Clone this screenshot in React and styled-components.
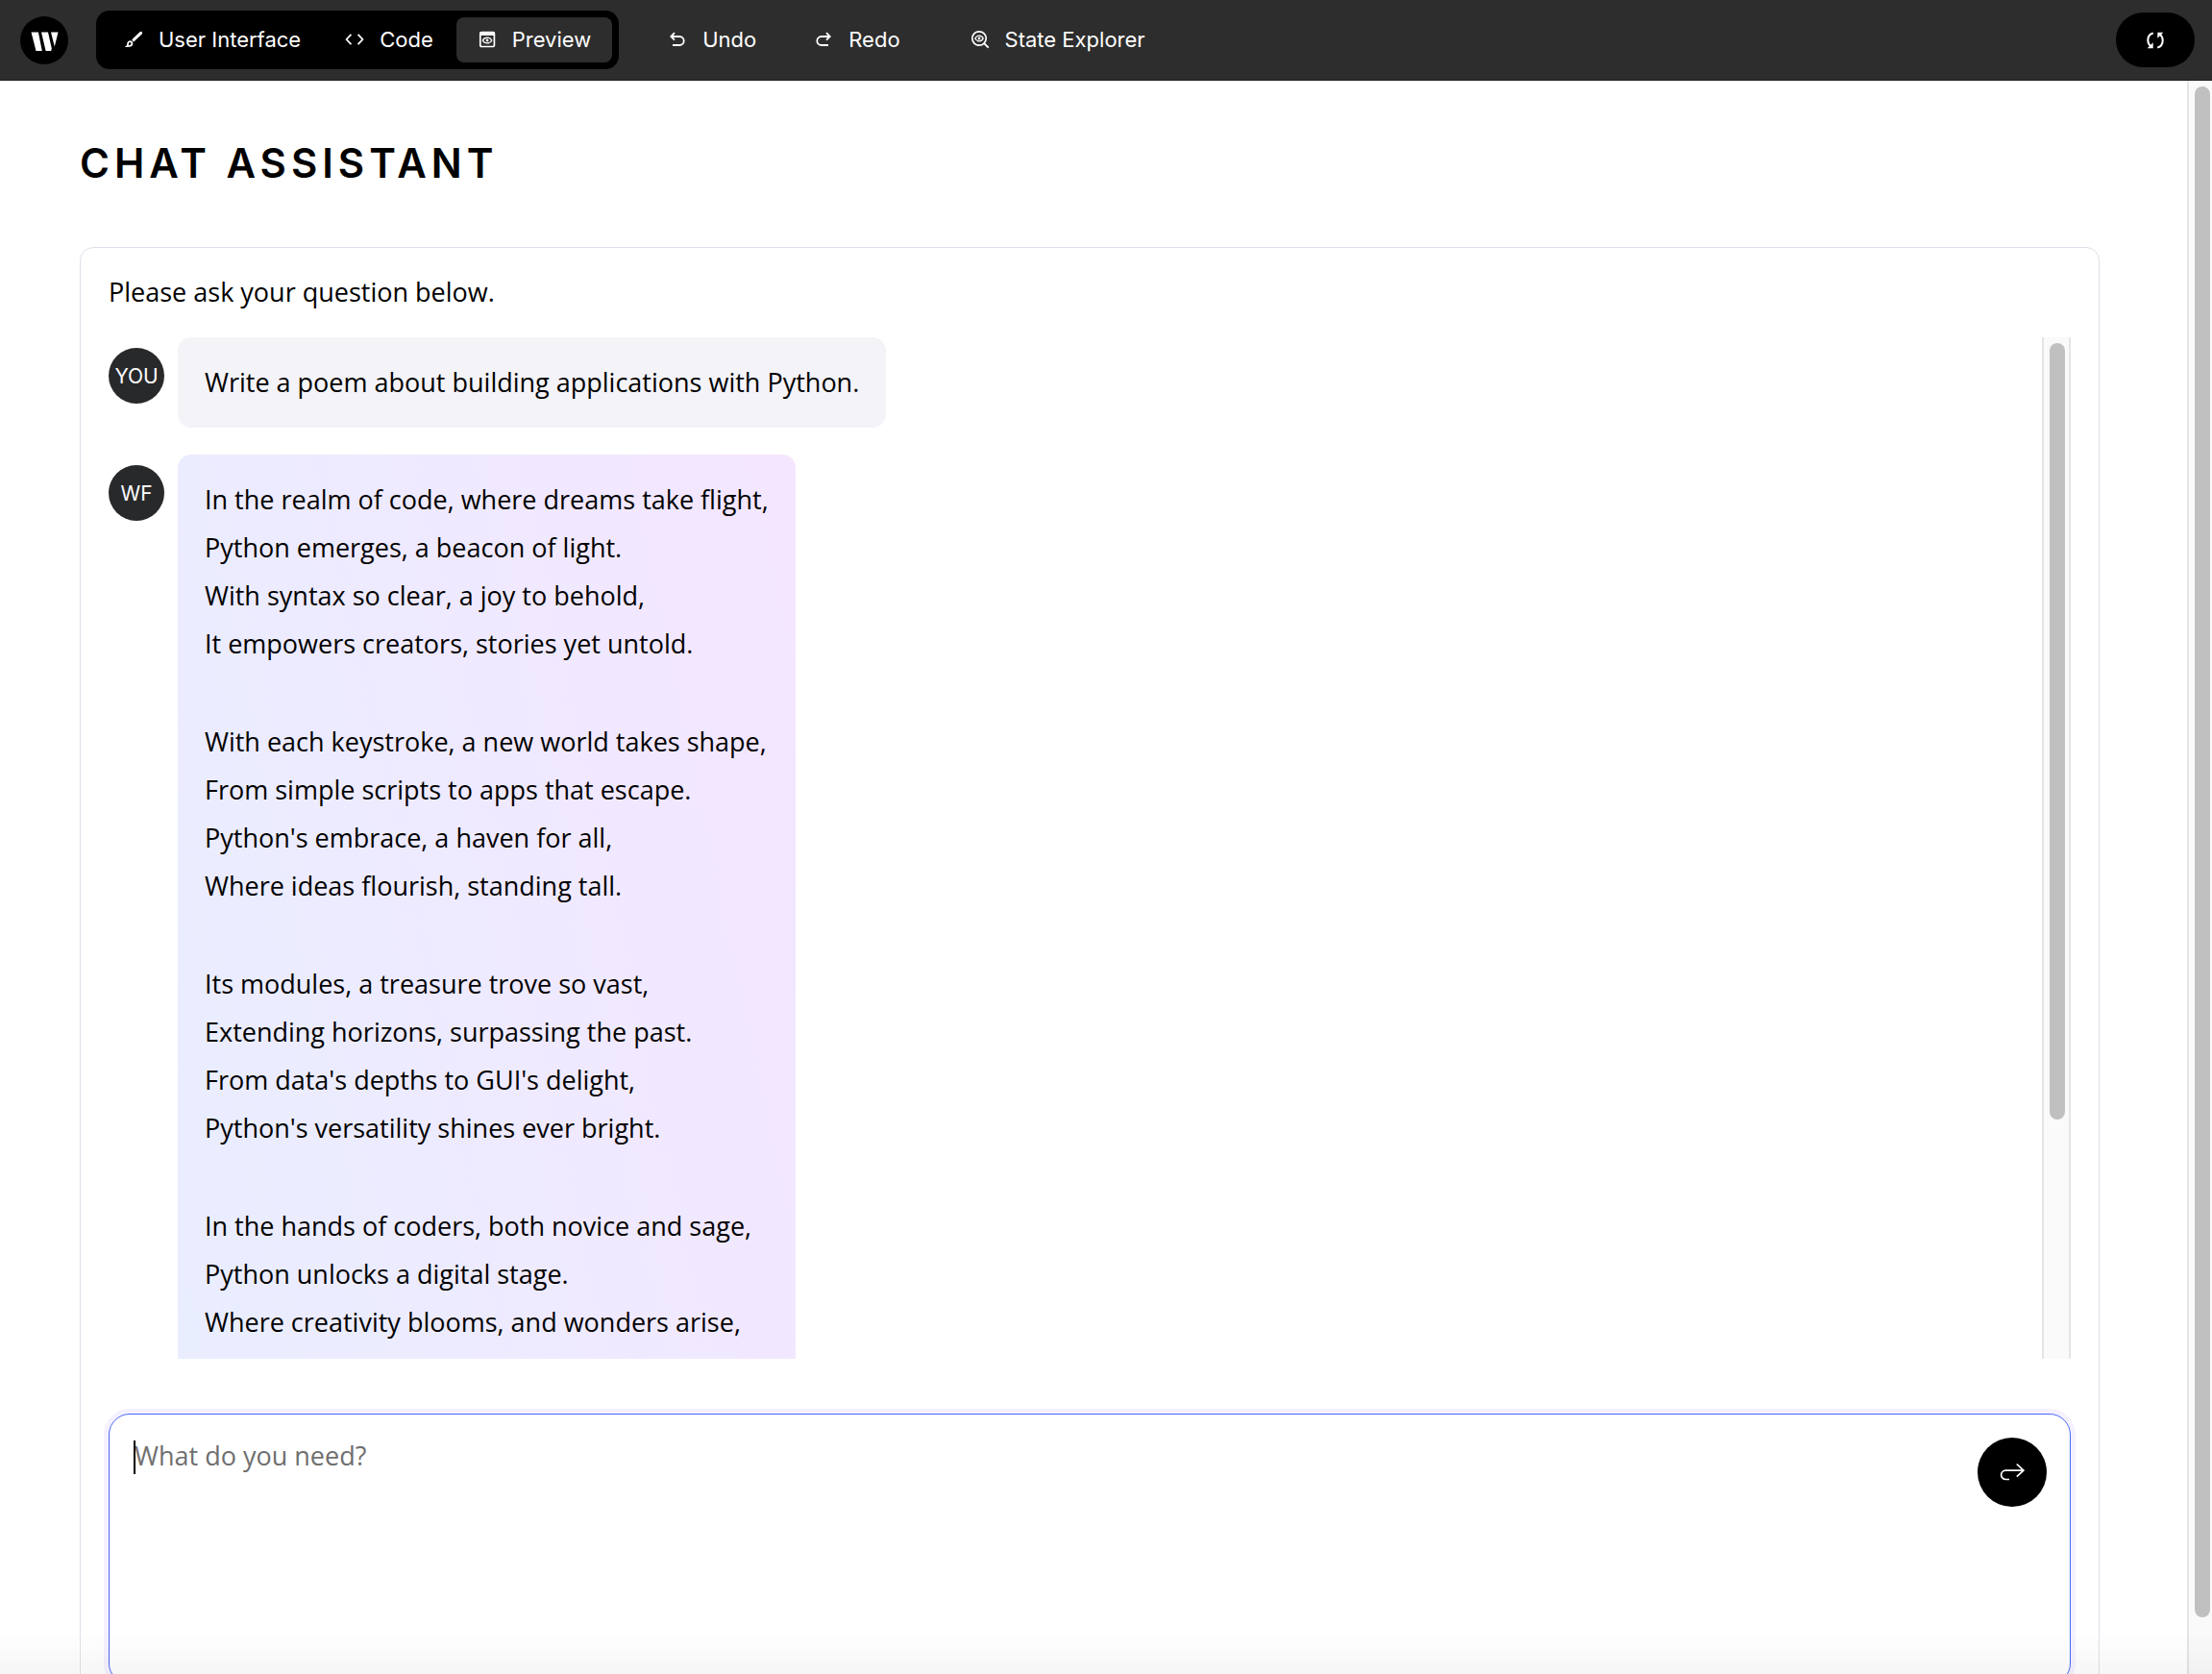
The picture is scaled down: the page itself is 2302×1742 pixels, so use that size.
import React from "react";
import styled, { createGlobalStyle } from "styled-components";

const uiFont = `"Inter", "Liberation Sans", sans-serif`;
const bodyFont = `"Open Sans", "Noto Sans", sans-serif`;

const GlobalStyle = createGlobalStyle`
  *, *::before, *::after { box-sizing: border-box; }
  body {
    margin: 0;
    background: #fff;
    color: #000;
    font-family: ${bodyFont};
    font-size: 27px;
  }
  h1, p { margin: 0; }
  button { font: inherit; color: inherit; border: 0; margin: 0; cursor: pointer; }
`;

const Shell = styled.div`
  display: flex;
  flex-direction: column;
  height: 100vh;
  overflow: hidden;
  position: relative;
`;

const Header = styled.header`
  display: flex;
  align-items: center;
  flex: none;
  height: 84px;
  padding: 0 18px 0 21px;
  background: #2d2d2d;
  border-bottom: 1px solid #1f1f1f;
  color: #fff;
  font-family: ${uiFont};
  font-size: 22px;
`;

const Logo = styled.a`
  display: flex;
  flex: none;
  width: 50px;
  height: 50px;
  margin-right: 29px;
  border-radius: 50%;
  background: #000;
`;

const Tabs = styled.nav`
  display: flex;
  gap: 2px;
  padding: 7px;
  border-radius: 14px;
  background: #000;
`;

const ToolButton = styled.button`
  display: flex;
  align-items: center;
  gap: 16px;
  height: 47px;
  padding: 0 22px 1px;
  border-radius: 8px;
  white-space: nowrap;
  background: ${(p) => (p.$active ? "#2d2d2d" : "transparent")};
`;

const History = styled.div`
  display: flex;
  gap: 16px;
  margin: 0 29px;
`;

const RefreshButton = styled.button`
  display: flex;
  align-items: center;
  justify-content: center;
  width: 82px;
  height: 57px;
  margin-left: auto;
  border-radius: 29px;
  background: #000;
`;

const Glyph = styled.svg`
  flex: none;
  width: ${(p) => p.$w || 20}px;
  height: ${(p) => p.$h || 20}px;
  fill: none;
  stroke: currentColor;
  stroke-width: 2;
`;

const Body = styled.div`
  display: flex;
  flex: 1;
  min-height: 0;
`;

const Page = styled.main`
  flex: 1;
  min-width: 0;
  overflow: hidden;
  padding: 56px 91px 0 83px;
`;

const Title = styled.h1`
  font-family: ${uiFont};
  font-size: 42px;
  font-weight: 600;
  line-height: 60px;
  letter-spacing: 5px;
  margin-bottom: 57px;
`;

const Card = styled.section`
  padding: 25px 29px 40px;
  border: 1px solid #dfe0ea;
  border-radius: 14px;
`;

const Intro = styled.p`
  line-height: 42px;
  margin-bottom: 26px;
`;

const Chat = styled.div`
  display: flex;
  height: 61vh;
  margin-bottom: 57px;
  overflow: hidden;
`;

const Log = styled.div`
  display: flex;
  flex-direction: column;
  gap: 28px;
  flex: 1;
  min-width: 0;
`;

const Message = styled.article`
  display: flex;
  flex: none;
  align-items: flex-start;
  gap: 14px;
`;

const Avatar = styled.div`
  display: flex;
  flex: none;
  align-items: center;
  justify-content: center;
  width: 58px;
  height: 58px;
  margin-top: 11px;
  border-radius: 50%;
  background: #28292b;
  color: #fff;
  font-family: ${uiFont};
  font-size: 21px;
  font-weight: 400;
`;

const Bubble = styled.div`
  display: flex;
  flex-direction: column;
  gap: 52px;
  padding: 22px 28px;
  border-radius: 14px;
  line-height: 50px;
  background: ${(p) =>
    p.$assistant ? "linear-gradient(78deg, #e9eeff 0%, #f4e6ff 100%)" : "#f4f3f8"};
`;

const Stanza = styled.div`
  min-height: 200px;
`;

const Track = styled.div`
  flex: none;
  width: ${(p) => (p.$framed ? 30 : 26)}px;
  padding: 6px ${(p) => (p.$framed ? 4 : 2)}px 6px 6px;
  border: 0 solid #e5e5e5;
  border-left-width: 2px;
  border-right-width: ${(p) => (p.$framed ? 2 : 0)}px;
  background: #fafafa;
`;

const Thumb = styled.div`
  border-radius: 8px;
  background: #c0c0c0;
`;

const Composer = styled.form`
  position: relative;
  display: flex;
  align-items: flex-start;
  height: 282px;
  padding: 0 24px 0 26px;
  border: 1px solid #4a67f2;
  border-radius: 22px;
  box-shadow: 0 0 0 5px #f5f1ff;
`;

const Question = styled.textarea`
  flex: 1;
  min-width: 0;
  height: 100%;
  padding: 23px 0;
  border: 0;
  outline: 0;
  resize: none;
  background: transparent;
  color: #000;
  caret-color: transparent;
  font: inherit;
  line-height: 40px;
  &::placeholder { color: #6f6f6f; opacity: 1; }
`;

const Caret = styled.span`
  position: absolute;
  top: 27px;
  left: 25px;
  width: 2px;
  height: 35px;
  background: #000;
`;

const SendButton = styled.button`
  display: flex;
  flex: none;
  align-items: center;
  justify-content: center;
  width: 72px;
  height: 72px;
  margin-top: 24px;
  border-radius: 50%;
  background: #000;
  color: #fff;
`;

const BottomShade = styled.div`
  position: absolute;
  left: 0;
  right: 0;
  bottom: 0;
  height: 44px;
  pointer-events: none;
  background: linear-gradient(rgba(0, 0, 0, 0), rgba(0, 0, 0, 0.035));
`;

const BrushIcon = () => (
  <Glyph viewBox="0 0 20 20" aria-hidden="true">
    <path d="M17.6 3.4 10 10.6" strokeWidth="3" strokeLinecap="round" />
    <path d="M6 12.2c1.600 0 2.600 1.100 2.400 2.500-.2 1.600-1.900 2.600-5.200 2.500 1-.8.6-2 1-3.100.3-1.200 1-1.900 1.800-1.900Z" strokeWidth="1.8" />
  </Glyph>
);
const CodeIcon = () => (
  <Glyph viewBox="0 0 20 20" aria-hidden="true">
    <path d="M6.4 4.8 1.6 10l4.8 5.2M13.6 4.8l4.8 5.2-4.8 5.2" strokeWidth="1.8" />
  </Glyph>
);
const PreviewIcon = () => (
  <Glyph viewBox="0 0 20 20" aria-hidden="true">
    <rect x="2.8" y="2.5" width="14.6" height="15" rx="1.2" strokeWidth="1.7" />
    <path d="M2.5 4.2h15.2" strokeWidth="3.4" />
    <path d="M5.4 11c1-2 2.7-2.9 4.7-2.9s3.7.9 4.7 2.9c-1 2-2.7 2.9-4.7 2.9S6.4 13 5.4 11Z" strokeWidth="1.4" />
    <circle cx="10.1" cy="11" r="1.4" fill="currentColor" stroke="none" />
  </Glyph>
);
const UndoIcon = () => (
  <Glyph viewBox="0 0 20 20" aria-hidden="true">
    <path d="M7 3.2 3.3 7 7 10.7M3.5 7h8.7a4.5 4.5 0 0 1 0 9H5" strokeWidth="1.8" />
  </Glyph>
);
const RedoIcon = () => (
  <Glyph viewBox="0 0 20 20" aria-hidden="true">
    <path d="M13 3.2 16.7 7 13 10.7M16.500 7H7.8a4.5 4.5 0 0 0 0 9H15" strokeWidth="1.8" />
  </Glyph>
);
const ExplorerIcon = () => (
  <Glyph viewBox="0 0 20 20" aria-hidden="true">
    <circle cx="9" cy="9" r="7.2" strokeWidth="1.7" />
    <path d="m14.200 14.200 4.5 4.5" strokeWidth="1.9" />
    <path d="M4.800 9c.9-1.900 2.4-2.8 4.2-2.8s3.3.9 4.2 2.8c-.9 1.900-2.4 2.8-4.2 2.8S5.7 10.9 4.8 9Z" strokeWidth="1.3" />
    <circle cx="9" cy="9" r="1.4" fill="currentColor" stroke="none" />
  </Glyph>
);
const RefreshIcon = () => (
  <Glyph viewBox="0 0 20 20" aria-hidden="true">
    <path d="M7.8 2.5C4.2 3.3 2.3 6.5 2.3 10c0 2.7 1.3 4.8 3.2 6.4" />
    <path d="M1.7 18.3h6v-6Z" fill="currentColor" stroke="none" />
    <path d="M12.2 17.5c3.6-.8 5.5-4 5.5-7.5 0-2.7-1.3-4.8-3.2-6.4" />
    <path d="M18.3 1.7h-6v6Z" fill="currentColor" stroke="none" />
  </Glyph>
);
const SendIcon = () => (
  <Glyph viewBox="0 0 26 20" $w={26} $h={20} aria-hidden="true">
    <path d="M10 17.5H6.3a4.7 4.7 0 0 1 0-9.4H25M17.8 1.5l7 6.6-7 6.6" strokeWidth="1.7" />
  </Glyph>
);

const poem = [
  [
    "In the realm of code, where dreams take flight,",
    "Python emerges, a beacon of light.",
    "With syntax so clear, a joy to behold,",
    "It empowers creators, stories yet untold.",
  ],
  [
    "With each keystroke, a new world takes shape,",
    "From simple scripts to apps that escape.",
    "Python's embrace, a haven for all,",
    "Where ideas flourish, standing tall.",
  ],
  [
    "Its modules, a treasure trove so vast,",
    "Extending horizons, surpassing the past.",
    "From data's depths to GUI's delight,",
    "Python's versatility shines ever bright.",
  ],
  [
    "In the hands of coders, both novice and sage,",
    "Python unlocks a digital stage.",
    "Where creativity blooms, and wonders arise,",
  ],
];

function Scrollbar({ ratio, framed }) {
  return (
    <Track $framed={framed} aria-hidden="true">
      <Thumb style={{ height: `${ratio * 100}%` }} />
    </Track>
  );
}

export default function App() {
  return (
    <Shell>
      <GlobalStyle />
      <Header>
        <Logo href="#" aria-label="Home">
          <svg viewBox="0 0 50 50" width="50" height="50" fill="#fff" aria-hidden="true">
            <path d="M11.5 16.5h7.400L22.800 36h-6.300ZM22 16.500h7l3.800 17-.6 2.500h-5.600ZM32 16.500h7.500l-3.700 15Z" />
          </svg>
        </Logo>
        <Tabs aria-label="Views">
          <ToolButton type="button"><BrushIcon />User Interface</ToolButton>
          <ToolButton type="button"><CodeIcon />Code</ToolButton>
          <ToolButton type="button" $active aria-current="page"><PreviewIcon />Preview</ToolButton>
        </Tabs>
        <History>
          <ToolButton type="button"><UndoIcon />Undo</ToolButton>
          <ToolButton type="button"><RedoIcon />Redo</ToolButton>
        </History>
        <ToolButton type="button"><ExplorerIcon />State Explorer</ToolButton>
        <RefreshButton type="button" aria-label="Refresh"><RefreshIcon /></RefreshButton>
      </Header>
      <Body>
        <Page>
          <Title>CHAT ASSISTANT</Title>
          <Card>
            <Intro>Please ask your question below.</Intro>
            <Chat>
              <Log>
                <Message>
                  <Avatar>YOU</Avatar>
                  <Bubble>
                    <p>Write a poem about building applications with Python.</p>
                  </Bubble>
                </Message>
                <Message>
                  <Avatar>WF</Avatar>
                  <Bubble $assistant>
                    {poem.map((lines) => (
                      <Stanza key={lines[0]}>
                        {lines.map((line) => <p key={line}>{line}</p>)}
                      </Stanza>
                    ))}
                  </Bubble>
                </Message>
              </Log>
              <Scrollbar ratio={0.769} framed />
            </Chat>
            <Composer onSubmit={(e) => e.preventDefault()}>
              <Caret />
              <Question aria-label="Your question" placeholder="What do you need?" />
              <SendButton type="submit" aria-label="Send"><SendIcon /></SendButton>
            </Composer>
          </Card>
        </Page>
        <Scrollbar ratio={0.968} />
      </Body>
      <BottomShade />
    </Shell>
  );
}
